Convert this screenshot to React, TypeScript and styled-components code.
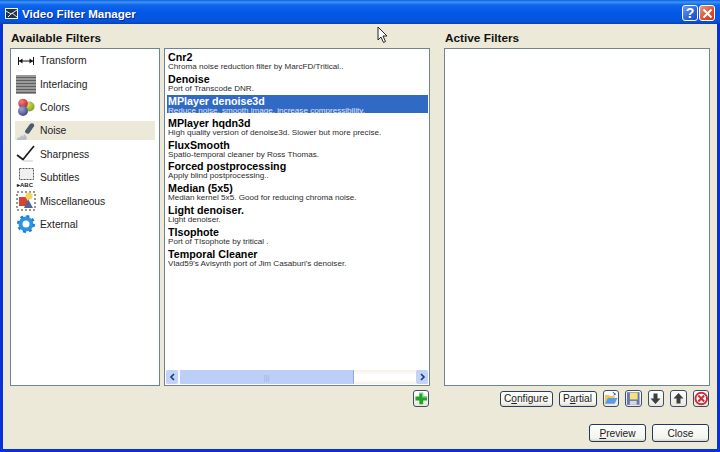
import React from 'react';
import styled, { createGlobalStyle } from 'styled-components';

const GlobalStyle = createGlobalStyle`
  html, body { margin: 0; padding: 0; background: #0831d9; }
  body { font-family: "Liberation Sans", Arial, sans-serif; }
`;

const Window = styled.div`
  position: relative;
  width: 720px;
  height: 452px;
  display: flex;
  flex-direction: column;
  overflow: hidden;
`;

const TitleBar = styled.div`
  box-sizing: border-box;
  height: 24px;
  flex: none;
  display: flex;
  align-items: center;
  padding: 2px 5px 0 5px;
  gap: 4px;
  background: linear-gradient(to bottom, #0a5ee0 0, #3f93f5 2px, #0f66ea 5px, #0458e6 12px, #0356e4 19px, #0a50d0 22px, #0a3fb0 24px);
`;

const TitleText = styled.div`
  flex: 1;
  color: #fff;
  font: bold 11.6px "Liberation Sans", Arial, sans-serif;
  text-shadow: 1px 1px 0 #0a2a90;
`;

const CaptionButton = styled.div<{ $danger?: boolean }>`
  box-sizing: border-box;
  width: 16px;
  height: 16px;
  margin-left: -3px;
  border: 1px solid #fff;
  border-radius: 3px;
  display: flex;
  align-items: center;
  justify-content: center;
  color: #fff;
  font: bold 14px "Liberation Sans", Arial, sans-serif;
  background: ${p => (p.$danger ? 'linear-gradient(135deg, #e89a80, #d9502c 60%, #c23a18)' : 'linear-gradient(135deg, #6f9cf5, #2a62e0 60%, #1c4cc8)')};
`;

const Client = styled.div`
  flex: 1;
  display: flex;
  flex-direction: column;
  margin: 0 3px 4px 3px;
  padding: 8px 6px 7px 7px;
  background: #ece9d8;
`;

const Main = styled.div`
  display: flex;
  gap: 14px;
`;

const Pane = styled.div<{ $width: number }>`
  width: ${p => p.$width}px;
  display: flex;
  flex-direction: column;
`;

const Heading = styled.div`
  height: 16px;
  padding-left: 1px;
  color: #111;
  font: bold 11.8px/13px "Liberation Sans", Arial, sans-serif;
`;

const Panels = styled.div`
  display: flex;
  gap: 4px;
`;

const Panel = styled.div<{ $width: number }>`
  box-sizing: border-box;
  width: ${p => p.$width}px;
  height: 338px;
  background: #fff;
  border: 1px solid #6f8396;
  display: flex;
  flex-direction: column;
  overflow: hidden;
`;

const CategoryList = styled.div`
  display: flex;
  flex-direction: column;
`;

const Category = styled.div<{ $active?: boolean }>`
  height: 23.4px;
  display: flex;
  align-items: center;
  margin: 0 4px;
  padding-left: 1px;
  gap: 4px;
  color: #222;
  font: 10.3px "Liberation Sans", Arial, sans-serif;
  background: ${p => (p.$active ? 'linear-gradient(to bottom, transparent 0, transparent 2px, #ece9d8 2px, #ece9d8 21px, transparent 21px)' : 'none')};
`;

const CategoryIcon = styled.div`
  width: 20px;
  height: 22px;
  flex: none;
  display: flex;
  align-items: center;
  justify-content: center;
`;

const FilterList = styled.div`
  flex: 1;
  padding: 2px 1px 0 2px;
  overflow: hidden;
`;

const FilterItem = styled.div<{ $selected?: boolean }>`
  height: 18.4px;
  margin-bottom: 3.5px;
  padding-left: 1px;
  overflow: ${p => (p.$selected ? 'hidden' : 'visible')};
  background: ${p => (p.$selected ? '#316ac5' : 'none')};
  color: ${p => (p.$selected ? '#fff' : '#000')};
`;

const FilterName = styled.div`
  font: bold 10.7px/12px "Liberation Sans", Arial, sans-serif;
  white-space: nowrap;
`;

const FilterDesc = styled.div`
  margin-top: -1px;
  font: 8.1px/10px "Liberation Sans", Arial, sans-serif;
  white-space: nowrap;
  opacity: 0.85;
`;

const ScrollBar = styled.div`
  height: 14px;
  margin: 0 1px 1px 1px;
  display: flex;
  align-items: stretch;
  background: linear-gradient(to bottom, #f4f2ea, #fff 40%, #fff 70%, #f4f2ea);
`;

const ScrollArrow = styled.div`
  width: 12px;
  flex: none;
  display: flex;
  align-items: center;
  justify-content: center;
  background: #c3d3f7;
  border-radius: 2px;
`;

const ScrollTrack = styled.div`
  flex: 1;
  padding: 0 62px 0 2px;
  display: flex;
`;

const ScrollThumb = styled.div`
  flex: 1;
  background: #bccff7;
  border-right: 1px solid #8ea6d8;
  border-radius: 1px;
  display: flex;
  align-items: center;
  justify-content: center;
  color: #9db4e6;
  font: 8px "Liberation Sans", Arial, sans-serif;
`;

const ActionRow = styled.div`
  height: 17px;
  margin-top: 4px;
  padding-right: 1px;
  display: flex;
  justify-content: flex-end;
  align-items: center;
  gap: 6px;
`;

const SmallButton = styled.div<{ $width: number }>`
  box-sizing: border-box;
  width: ${p => p.$width}px;
  height: 16px;
  border: 1px solid #2a3f5f;
  border-radius: 3px;
  background: linear-gradient(to bottom, #fff, #f4f3ec 80%, #dcd8c8);
  display: flex;
  align-items: center;
  justify-content: center;
  color: #222;
  font: 10.2px "Liberation Sans", Arial, sans-serif;
`;

const IconButton = styled.div`
  box-sizing: border-box;
  width: 16.5px;
  height: 17px;
  border: 1px solid #3a4f6f;
  border-radius: 3px;
  background: linear-gradient(to bottom, #fff, #ece9d8);
  display: flex;
  align-items: center;
  justify-content: center;
`;

const IconRow = styled.div`
  display: flex;
  gap: 6px;
`;

const Footer = styled.div`
  margin-top: 17px;
  display: flex;
  justify-content: flex-end;
  gap: 6px;
  padding-right: 2px;
`;

const FooterButton = styled.div`
  box-sizing: border-box;
  width: 57px;
  height: 18px;
  border: 1px solid #1f3a5c;
  border-radius: 3px;
  background: linear-gradient(to bottom, #fff, #f3f2ea 85%, #d8d4c4);
  display: flex;
  align-items: center;
  justify-content: center;
  color: #222;
  font: 10.2px "Liberation Sans", Arial, sans-serif;
`;

const Mnemonic = styled.span`
  text-decoration: underline;
`;

const Cursor = styled.svg`
  position: absolute;
  left: 377px;
  top: 26px;
`;

const categories: { label: string; icon: React.ReactNode; active?: boolean }[] = [
  {
    label: 'Transform',
    icon: (
      <svg width="18" height="12" viewBox="0 0 18 12">
        <path d="M1.5 2v8M16.5 2v8M2 6h14" stroke="#111" fill="none" />
        <path d="M2 6l3.5-2.5v5zM16 6l-3.5-2.5v5z" fill="#111" />
      </svg>
    ),
  },
  {
    label: 'Interlacing',
    icon: (
      <svg width="20" height="19" viewBox="0 0 20 19">
        <rect width="20" height="19" fill="#9a9a9a" />
        <path d="M0 2.5h20M0 5.5h20M0 8.5h20M0 11.5h20M0 14.5h20M0 17.5h20" stroke="#5e5e5e" />
      </svg>
    ),
  },
  {
    label: 'Colors',
    icon: (
      <svg width="20" height="20" viewBox="0 0 20 20">
        <defs>
          <radialGradient id="ballGreen" cx="0.35" cy="0.3" r="0.8">
            <stop offset="0" stopColor="#d6e060" />
            <stop offset="1" stopColor="#7a9a20" />
          </radialGradient>
          <radialGradient id="ballRed" cx="0.35" cy="0.3" r="0.8">
            <stop offset="0" stopColor="#f08080" />
            <stop offset="1" stopColor="#b81f24" />
          </radialGradient>
          <radialGradient id="ballBlue" cx="0.35" cy="0.3" r="0.8">
            <stop offset="0" stopColor="#9aa4d8" />
            <stop offset="1" stopColor="#37407a" />
          </radialGradient>
        </defs>
        <circle cx="13.5" cy="9.5" r="5" fill="url(#ballGreen)" />
        <circle cx="7" cy="6.5" r="4.8" fill="url(#ballRed)" />
        <circle cx="7" cy="14" r="5" fill="url(#ballBlue)" />
      </svg>
    ),
  },
  {
    label: 'Noise',
    active: true,
    icon: (
      <svg width="20" height="20" viewBox="0 0 20 20">
        <path d="M9 10l5-7c1.8-1.8 5-.4 4 2.2l-5 7.3c-1.5 1-4.5-.5-4-2.500z" fill="#4d5a70" />
        <path d="M1 19l1-3 2 1 1-3 2 2 1-3 2 2 1 2-1 2z" fill="#b8bcc4" />
      </svg>
    ),
  },
  {
    label: 'Sharpness',
    icon: (
      <svg width="20" height="18" viewBox="0 0 20 18">
        <path d="M1 10l6 4.5 2-2.5L18 1" stroke="#1c1c1c" strokeWidth="1.7" fill="none" />
        <path d="M8 16h9" stroke="#c8c8c8" />
      </svg>
    ),
  },
  {
    label: 'Subtitles',
    icon: (
      <svg width="20" height="20" viewBox="0 0 20 20">
        <rect x="3.5" y="0.5" width="14" height="11" fill="#f0f0f0" stroke="#555" strokeDasharray="2 1" />
        <text x="1" y="19" fontFamily="Liberation Sans" fontSize="6" fontWeight="bold" fill="#222">▸ABC</text>
      </svg>
    ),
  },
  {
    label: 'Miscellaneous',
    icon: (
      <svg width="20" height="20" viewBox="0 0 20 20">
        <rect x="1" y="1" width="18" height="18" fill="none" stroke="#333" strokeDasharray="2 2" />
        <rect x="3" y="6" width="8" height="9" fill="#d8442c" />
        <circle cx="13" cy="5" r="3.6" fill="#f0d860" />
        <path d="M12 8l5 9H8z" fill="#56658f" />
      </svg>
    ),
  },
  {
    label: 'External',
    icon: (
      <svg width="18" height="18" viewBox="0 0 18 18">
        <circle cx="9" cy="9" r="5.5" fill="none" stroke="#2a94e4" strokeWidth="4" />
        <circle cx="9" cy="9" r="8" fill="none" stroke="#1a7ad0" strokeWidth="2" strokeDasharray="3 3.3" />
      </svg>
    ),
  },
];

const filters: { name: string; desc: string; selected?: boolean }[] = [
  { name: 'Cnr2', desc: 'Chroma noise reduction filter by MarcFD/Tritical..' },
  { name: 'Denoise', desc: 'Port of Transcode DNR.' },
  { name: 'MPlayer denoise3d', desc: 'Reduce noise, smooth image, increase compressibility.', selected: true },
  { name: 'MPlayer hqdn3d', desc: 'High quality version of denoise3d. Slower but more precise.' },
  { name: 'FluxSmooth', desc: 'Spatio-temporal cleaner by Ross Thomas.' },
  { name: 'Forced postprocessing', desc: 'Apply blind postprocessing..' },
  { name: 'Median (5x5)', desc: 'Median kernel 5x5. Good for reducing chroma noise.' },
  { name: 'Light denoiser.', desc: 'Light denoiser.' },
  { name: 'TIsophote', desc: 'Port of TIsophote by tritical .' },
  { name: 'Temporal Cleaner', desc: "Vlad59's Avisynth port of Jim Casaburi's denoiser." },
];

const App = () => {
  return (
    <Window>
      <GlobalStyle />
      <TitleBar>
        <svg width="13" height="11" viewBox="0 0 13 11">
          <rect width="13" height="11" fill="#f4f4f4" />
          <rect x="1" y="1" width="11" height="9" fill="#23344a" />
          <path d="M1 3l5 3 6-4M3 9l4-4 5 4" stroke="#e8e8e8" fill="none" />
        </svg>
        <TitleText>Video Filter Manager</TitleText>
        <CaptionButton>?</CaptionButton>
        <CaptionButton $danger>
          <svg width="11" height="11" viewBox="0 0 11 11">
            <path d="M1.5 1.5l8 8M9.5 1.5l-8 8" stroke="#fff" strokeWidth="2" />
          </svg>
        </CaptionButton>
      </TitleBar>
      <Client>
        <Main>
          <Pane $width={420}>
            <Heading>Available Filters</Heading>
            <Panels>
              <Panel $width={150}>
                <CategoryList>
                  {categories.map(c => (
                    <Category key={c.label} $active={c.active}>
                      <CategoryIcon>{c.icon}</CategoryIcon>
                      {c.label}
                    </Category>
                  ))}
                </CategoryList>
              </Panel>
              <Panel $width={266}>
                <FilterList>
                  {filters.map(f => (
                    <FilterItem key={f.name} $selected={f.selected}>
                      <FilterName>{f.name}</FilterName>
                      <FilterDesc>{f.desc}</FilterDesc>
                    </FilterItem>
                  ))}
                </FilterList>
                <ScrollBar>
                  <ScrollArrow>
                    <svg width="7" height="8" viewBox="0 0 7 8">
                      <path d="M5 1L2 4l3 3" stroke="#1c3a78" strokeWidth="1.6" fill="none" />
                    </svg>
                  </ScrollArrow>
                  <ScrollTrack>
                    <ScrollThumb>|||</ScrollThumb>
                  </ScrollTrack>
                  <ScrollArrow>
                    <svg width="7" height="8" viewBox="0 0 7 8">
                      <path d="M2 1l3 3-3 3" stroke="#1c3a78" strokeWidth="1.6" fill="none" />
                    </svg>
                  </ScrollArrow>
                </ScrollBar>
              </Panel>
            </Panels>
            <ActionRow>
              <IconButton>
                <svg width="15" height="15" viewBox="0 0 15 15">
                  <path d="M5.5 1.5h4v4h4v4h-4v4h-4v-4h-4v-4h4z" fill="#1fa32c" />
                  <path d="M5.5 1.5h4v4h4v1h-5v-4h-3z" fill="#8fdc8a" />
                </svg>
              </IconButton>
            </ActionRow>
          </Pane>
          <Pane $width={266}>
            <Heading>Active Filters</Heading>
            <Panel $width={266} />
            <ActionRow>
              <SmallButton $width={53}>
                <span>
                  C<Mnemonic>o</Mnemonic>nfigure
                </span>
              </SmallButton>
              <SmallButton $width={38}>
                <span>
                  P<Mnemonic>a</Mnemonic>rtial
                </span>
              </SmallButton>
              <IconRow>
                <IconButton>
                  <svg width="15" height="15" viewBox="0 0 15 15">
                    <path d="M1 13V4h4l1 1h5v2z" fill="#e8c860" />
                    <path d="M1 13l3-6h10l-3 6z" fill="#5a9ae8" />
                    <path d="M9 1l3 2-2 1" stroke="#1c4ca0" fill="none" />
                  </svg>
                </IconButton>
                <IconButton>
                  <svg width="15" height="15" viewBox="0 0 15 15">
                    <rect x="1" y="1" width="13" height="13" fill="#6a76b0" />
                    <rect x="4" y="1.5" width="8" height="7" fill="#f6e27a" />
                    <rect x="4" y="10" width="7" height="4" fill="#d8d8e0" />
                  </svg>
                </IconButton>
                <IconButton>
                  <svg width="13" height="13" viewBox="0 0 13 13">
                    <path d="M4.5 1.5h4v5h3l-5 5.5-5-5.500h3z" fill="#3a3f46" />
                  </svg>
                </IconButton>
                <IconButton>
                  <svg width="13" height="13" viewBox="0 0 13 13">
                    <path d="M4.5 11.5h4v-5h3l-5-5.5-5 5.500h3z" fill="#3a3f46" />
                  </svg>
                </IconButton>
                <IconButton>
                  <svg width="15" height="15" viewBox="0 0 15 15">
                    <circle cx="7.5" cy="7.5" r="6" fill="#fff" stroke="#c8303a" strokeWidth="2" />
                    <path d="M4.5 4.5l6 6M10.5 4.5l-6 6" stroke="#c8303a" strokeWidth="2.2" />
                  </svg>
                </IconButton>
              </IconRow>
            </ActionRow>
          </Pane>
        </Main>
        <Footer>
          <FooterButton>
            <span>
              <Mnemonic>P</Mnemonic>review
            </span>
          </FooterButton>
          <FooterButton>Close</FooterButton>
        </Footer>
      </Client>
      <Cursor width="11" height="18" viewBox="0 0 11 18">
        <path d="M1 1v13l3-3 2.5 5.5 2-1L6 10h4z" fill="#fff" stroke="#222" />
      </Cursor>
    </Window>
  );
};

export default App;
